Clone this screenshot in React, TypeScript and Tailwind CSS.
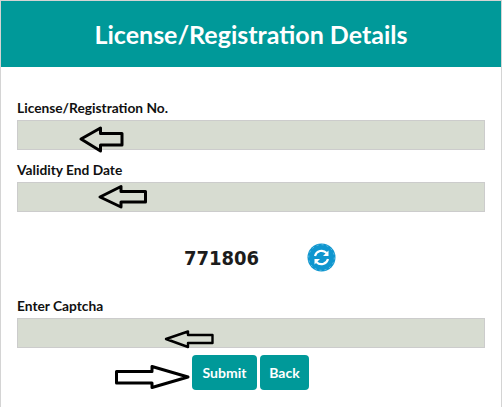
export default function App() {
  const label = "block text-[13.75px] leading-5 font-bold text-[#111] mb-0.5";
  const field = "block w-[468px] h-[30px] bg-[#d7dcd1] border border-[#cccccc]";
  return (
    <div className="relative w-[503px] h-[407px] bg-white font-['Lato',sans-serif] overflow-hidden">
      <div className="mr-[1px] h-[407px] border-x border-t border-[#d4d4d4] flex flex-col">
        <div className="h-[66px] shrink-0 bg-[#009999] flex items-center justify-center">
          <h1 className="text-[25px] leading-8 font-bold text-white">License/Registration Details</h1>
        </div>
        <div className="pl-4 pt-[31px]">
          <label className={label}>License/Registration No.</label>
          <div className={field + " mb-2.5"} />
          <label className={label}>Validity End Date</label>
          <div className={field} />
          <div className="flex items-center h-[84px] pl-[167px] pt-[7px]">
            <span className="w-[123px] text-[20px] font-bold text-[#1c1c1c] font-['DejaVu_Sans_Condensed','DejaVu_Sans',sans-serif]">771806</span>
            <svg width="29" height="29" viewBox="0 0 29 29">
              <circle cx="14.5" cy="14.5" r="14" fill="#0f96cf" />
              <circle cx="14.5" cy="14.5" r="12.8" fill="none" stroke="#7cc6e6" strokeWidth="0.8" strokeDasharray="2 3" />
              <path d="M8 13a6.8 6.8 0 0 1 11.6-3" fill="none" stroke="#fff" strokeWidth="2.2" />
              <path d="M21.5 7.5v5.5h-5.5z" fill="#fff" />
              <path d="M21 16a6.8 6.8 0 0 1-11.6 3" fill="none" stroke="#fff" strokeWidth="2.2" />
              <path d="M7.5 21.5v-5.5h5.5z" fill="#fff" />
            </svg>
          </div>
          <label className={label}>Enter Captcha</label>
          <div className={field} />
          <div className="flex gap-[3px] mt-[7px] ml-[175px]">
            <button className="w-[65px] h-[35px] rounded bg-[#009999] text-white text-[14px] font-bold">Submit</button>
            <button className="w-[49px] h-[35px] rounded bg-[#009999] text-white text-[14px] font-bold">Back</button>
          </div>
        </div>
      </div>
      <svg className="absolute inset-0 pointer-events-none" width="503" height="407" viewBox="0 0 503 407" fill="none" stroke="#000" strokeLinejoin="round">
        <polygon strokeWidth="3" points="81,139 100.5,128 100.5,133.5 122,133.5 122,145 100.5,145 100.5,151" />
        <polygon strokeWidth="3" points="100,197 121,186.5 121,191.5 145.5,191.5 145.5,202 121,202 121,207" />
        <polygon strokeWidth="2.4" points="166,339 188,331.5 188,335 212.5,335 212.5,343 188,343 188,347" />
        <polygon strokeWidth="3" points="188,377 152,366.5 152,371.5 116.5,371.5 116.5,383 152,383 152,387.5" />
      </svg>
    </div>
  );
}
